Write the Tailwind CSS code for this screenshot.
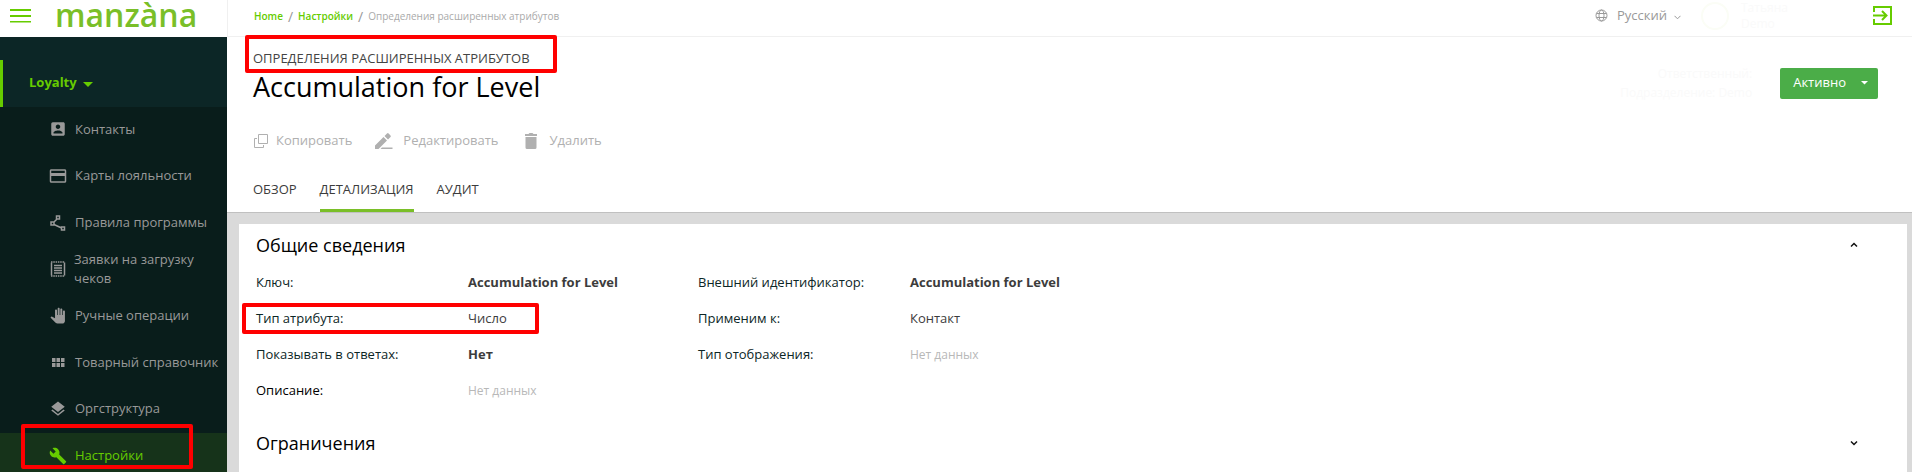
<!DOCTYPE html>
<html lang="ru">
  <head>
    <meta charset="UTF-8" />
    <meta name="viewport" content="width=device-width, initial-scale=1.0" />
    <title>Accumulation for Level</title>
    <script src="https://cdn.jsdelivr.net/npm/@tailwindcss/browser@4"></script>
  </head>
  <body class="flex h-screen overflow-hidden bg-white font-['Open_Sans','Noto_Sans',sans-serif] text-[13px] text-[#3c3c3c]">
    <!-- Sidebar -->
    <aside class="w-[227px] shrink-0 bg-[#091d1b]">
      <div class="flex h-[37px] items-center bg-white pl-[10px]">
        <button type="button" aria-label="Меню" class="mt-[-6px] text-[#66cc00]">
          <svg class="h-[14px] w-[21px]" viewBox="0 0 21 14" fill="currentColor">
            <path d="M0 0h21v2H0zM0 6h21v2H0zM0 12h21v1.500H0z" />
          </svg>
        </button>
        <a href="#" class="mt-[-8px] ml-6 text-[32px] leading-9 font-semibold text-[#7abf28]">manzàna</a>
      </div>

      <div class="bg-[#0c2626] pt-[23px]">
        <button type="button" class="flex h-[47px] w-full items-center gap-[6px] border-l-3 border-[#66cc00] pb-[2px] pl-[26px] font-bold text-[#66cc00]">
          Loyalty
          <svg class="mt-1 h-[5px] w-[10px]" viewBox="0 0 10 5" fill="currentColor"><path d="M0 0h10L5 5z" /></svg>
        </button>
      </div>

      <nav class="flex h-[373px] flex-col text-[#999]">
        <a href="#" class="flex flex-1 items-center pb-[2px] pl-[49px]">
          <svg class="mr-[8px] h-[18px] w-[18px]" viewBox="0 0 24 24" fill="currentColor"><path d="M3 5v14c0 1.100.89 2 2 2h14c1.100 0 2-.9 2-2V5c0-1.100-.9-2-2-2H5a2 2 0 0 0-2 2zm12 4c0 1.660-1.340 3-3 3s-3-1.340-3-3 1.340-3 3-3 3 1.340 3 3zm-9 8c0-2 4-3.100 6-3.100s6 1.100 6 3.100v1H6v-1z" /></svg>
          Контакты
        </a>
        <a href="#" class="flex flex-1 items-center pb-[2px] pl-[49px]">
          <svg class="mr-[8px] h-[18px] w-[18px]" viewBox="0 0 24 24" fill="currentColor"><path d="M21 3H3C1.900 3 1 3.900 1 5v14c0 1.100.9 2 2 2h18c1.100 0 2-.9 2-2V5c0-1.100-.9-2-2-2zm0 16H3v-7h18v7zm0-11H3V5h18v3z" /></svg>
          Карты лояльности
        </a>
        <a href="#" class="flex flex-1 items-center pb-[2px] pl-[49px]">
          <svg class="mr-[8px] h-[18px] w-[18px]" viewBox="0 0 18 18" fill="none" stroke="currentColor" stroke-width="1.500"><path d="M7.500 2h3v3h-3zM2 8h3v3H2zM12.500 13h3v3h-3zM8 5 5 8M5 10.500l7.500 3.500" /></svg>
          Правила программы
        </a>
        <a href="#" class="flex flex-1 items-center pr-5 pb-[2px] pl-[49px] leading-[19px]">
          <svg class="mr-[7px] h-[18px] w-[18px] shrink-0" viewBox="0 0 18 18" fill="none" stroke="currentColor" stroke-width="1.500"><path d="M2.500 2.500v13M15.500 2.500v13M5 5.500h8M5 8h8M5 10.500h8M5 13h8" /><path d="M2 2h14M2 16h14" stroke-dasharray="1.500 .8" /></svg>
          Заявки на загрузку чеков
        </a>
        <a href="#" class="flex flex-1 items-center pb-[2px] pl-[49px]">
          <svg class="mr-[8px] h-[18px] w-[18px]" viewBox="0 0 24 24" fill="currentColor"><path d="M23 5.500V20c0 2.200-1.800 4-4 4h-7.300c-1.080 0-2.100-.43-2.850-1.190L1 14.830s1.260-1.230 1.300-1.250c.22-.19.490-.290.790-.290.220 0 .42.060.6.160.04.010 4.310 2.460 4.310 2.460V4c0-.83.67-1.500 1.500-1.500S11 3.170 11 4v7h1V1.500c0-.83.67-1.500 1.500-1.500S15 .67 15 1.500V11h1V2.500c0-.83.67-1.500 1.500-1.500s1.500.67 1.500 1.500V11h1V5.500c0-.83.67-1.500 1.500-1.500s1.500.67 1.500 1.500z" transform="translate(1 1) scale(.88)" /></svg>
          Ручные операции
        </a>
        <a href="#" class="flex flex-1 items-center pb-[2px] pl-[49px]">
          <svg class="mr-[8px] h-[18px] w-[18px]" viewBox="0 0 18 18" fill="currentColor"><path d="M3 5h3.500v4H3zM7.500 5H11v4H7.500zM12 5h3.500v4H12zM3 10h3.500v4H3zM7.500 10H11v4H7.500zM12 10h3.500v4H12z" /></svg>
          Товарный справочник
        </a>
        <a href="#" class="flex flex-1 items-center pb-[2px] pl-[49px]">
          <svg class="mr-[8px] h-[18px] w-[18px]" viewBox="0 0 24 24" fill="currentColor"><path d="m11.990 18.540-7.370-5.730L3 14.070l9 7 9-7-1.630-1.270-7.380 5.740zM12 16l7.360-5.730L21 9l-9-7-9 7 1.630 1.270L12 16z" /></svg>
          Оргструктура
        </a>
        <a href="#" class="relative flex flex-1 items-center bg-[#16331a] pb-[2px] pl-[49px] text-[#66cc00]">
          <svg class="mr-[8px] h-[18px] w-[18px]" viewBox="0 0 24 24" fill="currentColor"><path d="m22.700 19-9.100-9.100c.9-2.300.4-5-1.500-6.900-2-2-5-2.400-7.400-1.300L9 6 6 9 1.600 4.700C.4 7.100.9 10.100 2.900 12.100c1.900 1.900 4.600 2.400 6.900 1.500l9.100 9.100c.4.400 1 .4 1.400 0l2.300-2.300c.5-.4.500-1.100.1-1.400z" /></svg>
          Настройки
          <span class="absolute top-[-9px] left-[21px] h-[45px] w-[172px] rounded-xs border-4 border-[#ff0000]"></span>
        </a>
      </nav>
    </aside>

    <div class="flex min-w-0 flex-1 flex-col">
      <!-- Top bar -->
      <header class="flex h-[37px] shrink-0 items-center justify-between border-b border-l border-[#f0f0f0] pr-5 pb-[5px] pl-[26px] text-[#999]">
        <nav class="mt-[2px] flex items-center gap-[5px] text-[10px]">
          <a href="#" class="font-semibold text-[#66cc00]">Home</a>
          <span class="text-sm leading-4">/</span>
          <a href="#" class="font-semibold text-[#66cc00]">Настройки</a>
          <span class="text-sm leading-4">/</span>
          <span class="text-[#aaa]">Определения расширенных атрибутов</span>
        </nav>
        <div class="flex items-center">
          <button type="button" class="flex items-center">
            <svg class="mr-[9px] h-[13px] w-[13px]" viewBox="0 0 13 13" fill="none" stroke="currentColor"><circle cx="6.500" cy="6.500" r="5.500" /><ellipse cx="6.500" cy="6.500" rx="2.500" ry="5.500" /><path d="M1.500 4.500h10M1.500 8.500h10" /></svg>
            Русский
            <svg class="mt-[3px] ml-[7px] h-[5px] w-[7px]" viewBox="0 0 7 5" fill="none" stroke="currentColor"><path d="m.5.8 3 3 3-3" /></svg>
          </button>
          <span class="ml-5 h-7 w-7 rounded-full border-2 border-[#fbfdf6]"></span>
          <div class="ml-3 w-[132px] text-xs leading-4 text-[#fafafa]">
            <p>Татьяна</p>
            <p>Demo</p>
          </div>
          <button type="button" aria-label="Выход" class="text-[#66cc00]">
            <svg class="h-[19px] w-[19px]" viewBox="0 0 19 19" fill="none" stroke="currentColor" stroke-width="2"><path d="M1 6V1h17v17H1v-5M0 9.500h13M9 5l4.500 4.500L9 14" /></svg>
          </button>
        </div>
      </header>

      <!-- Record title -->
      <div class="border-b border-[#c0c0c0] px-[26px]">
        <div class="flex items-start justify-between pt-[11px] pr-2">
          <div>
            <p class="relative leading-5 text-[#444] uppercase">
              Определения расширенных атрибутов
              <span class="absolute top-[-13px] left-[-8px] h-[38px] w-[312px] rounded-xs border-4 border-[#ff0000]"></span>
            </p>
            <h1 class="text-[27px] leading-[38px] text-black">Accumulation for Level</h1>
          </div>
          <div class="mt-4 flex items-center gap-7">
            <div class="text-right text-xs leading-[19px] text-[#fafafa]">
              <p>Ответственный:</p>
              <p>Подразделение: Demo</p>
            </div>
            <button type="button" class="flex h-[31px] items-center rounded-xs bg-[#4bad48] pr-[10px] pl-[13px] text-white">
              Активно
              <svg class="ml-[15px] h-1 w-[7px]" viewBox="0 0 7 4" fill="currentColor"><path d="M0 0h7L3.500 3.500z" /></svg>
            </button>
          </div>
        </div>

        <div class="mt-[25px] flex h-5 items-center gap-[23px] text-[#b0b0b0]">
          <button type="button" class="flex items-center gap-[7px]">
            <svg class="h-4 w-4" viewBox="0 0 16 16" fill="none" stroke="currentColor"><path d="M5.500 1.500h9v9h-9zM4 5.500H1.500v9h9V12" /></svg>
            Копировать
          </button>
          <button type="button" class="flex items-center gap-[10px]">
            <svg class="h-[18px] w-[18px]" viewBox="0 0 18 18" fill="currentColor"><path d="M0 13.500V17h3.500l8.500-8.500L8.500 5zM9.500 4 12 1.500q.8-.8 1.600 0l1.900 1.900q.8.800 0 1.600L13 7.500zM7 15.500h10.500V17H5.500z" /></svg>
            Редактировать
          </button>
          <button type="button" class="flex items-center gap-[10px]">
            <svg class="h-[18px] w-[18px]" viewBox="0 0 18 18" fill="currentColor"><path d="M3.500 5h11v10.500a1.500 1.500 0 0 1-1.500 1.500H5a1.500 1.500 0 0 1-1.500-1.500zM3 2h3.500l1-1h3l1 1H15v2H3z" /></svg>
            Удалить
          </button>
        </div>

        <div class="mt-6 flex gap-[23px] uppercase">
          <button type="button" class="h-[37px] pb-[7px] uppercase">Обзор</button>
          <button type="button" class="h-[37px] border-b-3 border-[#7abf28] pb-1 uppercase">Детализация</button>
          <button type="button" class="h-[37px] pb-[7px] uppercase">Аудит</button>
        </div>
      </div>

      <!-- Details -->
      <main class="flex-1 bg-[#dadada] pt-[11px] pr-[5px] pl-3">
        <div class="h-full bg-white pt-[3px] pr-[49px] pl-[17px]">
          <div class="flex h-9 items-center justify-between">
            <h2 class="text-lg text-black">Общие сведения</h2>
            <button type="button" aria-label="Свернуть">
              <svg class="h-[6px] w-2" viewBox="0 0 8 6" fill="none" stroke="#111" stroke-width="1.500"><path d="m1 4.500 3-3 3 3" /></svg>
            </button>
          </div>
          <dl class="mt-[2px] grid auto-rows-[36px] grid-cols-[212px_230px_212px_1fr] items-center text-[#0c2626]">
            <dt>Ключ:</dt>
            <dd class="font-bold text-[#3c3c3c]">Accumulation for Level</dd>
            <dt>Внешний идентификатор:</dt>
            <dd class="font-bold text-[#3c3c3c]">Accumulation for Level</dd>
            <dt class="relative">
              Тип атрибута:
              <span class="absolute top-[-6px] left-[-14px] h-[31px] w-[297px] rounded-xs border-4 border-[#ff0000]"></span>
            </dt>
            <dd class="text-[#3c3c3c]">Число</dd>
            <dt>Применим к:</dt>
            <dd class="text-[#3c3c3c]">Контакт</dd>
            <dt>Показывать в ответах:</dt>
            <dd class="font-bold text-[#3c3c3c]">Нет</dd>
            <dt>Тип отображения:</dt>
            <dd class="text-xs text-[#b8b8b8]">Нет данных</dd>
            <dt class="text-black">Описание:</dt>
            <dd class="text-xs text-[#b8b8b8]">Нет данных</dd>
          </dl>
          <div class="mt-4 flex h-9 items-center justify-between">
            <h2 class="text-lg text-black">Ограничения</h2>
            <button type="button" aria-label="Развернуть">
              <svg class="h-[6px] w-2" viewBox="0 0 8 6" fill="none" stroke="#111" stroke-width="1.500"><path d="m1 1.500 3 3 3-3" /></svg>
            </button>
          </div>
        </div>
      </main>
    </div>
  </body>
</html>
